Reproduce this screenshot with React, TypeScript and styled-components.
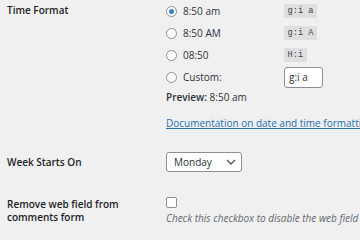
import React from 'react'
import styled, { createGlobalStyle } from 'styled-components'

const GlobalStyle = createGlobalStyle`
  html, body {
    margin: 0;
    background: #f0f0f1;
    overflow: hidden;
  }
  body {
    font-family: "Open Sans", "Noto Sans", sans-serif;
    font-size: 10px;
    line-height: 13px;
    color: #2c3338;
  }
`

const FormTable = styled.div`
  width: 360px;
  height: 240px;
  overflow: hidden;
`

const Row = styled.div<{ $top: number; $align?: string }>`
  display: grid;
  grid-template-columns: 159px 1fr;
  align-items: ${p => p.$align || 'start'};
  padding: ${p => p.$top}px 0 0 7px;
`

const Label = styled.div<{ $top?: number }>`
  font-weight: 600;
  color: #1d2327;
  padding: ${p => p.$top || 0}px 14px 0 0;
  line-height: 13px;
`

const Field = styled.div`
  min-width: 0;
  white-space: nowrap;
`

const Option = styled.label`
  display: flex;
  align-items: center;
  height: 22px;
`

const Radio = styled.span<{ $checked?: boolean }>`
  width: 11px;
  height: 11px;
  box-sizing: border-box;
  border: 1px solid #8c8f94;
  border-radius: 50%;
  background: #fff;
  margin-right: 6px;
  display: flex;
  align-items: center;
  justify-content: center;
  &::after {
    content: '';
    width: 5px;
    height: 5px;
    border-radius: 50%;
    background: ${p => (p.$checked ? '#3582c4' : 'transparent')};
  }
`

const OptionText = styled.span`
  width: 101px;
`

const Code = styled.code`
  font-family: "Liberation Mono", "DejaVu Sans Mono", monospace;
  font-size: 8.6px;
  line-height: 14px;
  padding: 0 3.6px;
  background: rgba(0, 0, 0, 0.07);
  color: #3c434a;
`

const TextInput = styled.div`
  box-sizing: border-box;
  width: 39px;
  height: 21px;
  border: 1px solid #8c8f94;
  border-radius: 3px;
  background: #fff;
  padding: 0 4px;
  line-height: 19px;
  color: #2c3338;
`

const Preview = styled.p`
  margin: 3px 0 0;
  strong {
    font-weight: 600;
  }
`

const DocLink = styled.a`
  display: block;
  margin-top: 13px;
  color: #2271b1;
  text-decoration: underline;
`

const Select = styled.div`
  box-sizing: border-box;
  width: 76px;
  height: 20px;
  border: 1px solid #8c8f94;
  border-radius: 3px;
  background: #fff;
  display: flex;
  align-items: center;
  justify-content: space-between;
  padding: 0 5px 0 7px;
  color: #2c3338;
`

const Checkbox = styled.span`
  display: block;
  width: 11px;
  height: 11px;
  box-sizing: border-box;
  border: 1px solid #8c8f94;
  border-radius: 2px;
  background: #fff;
`

const Description = styled.p`
  margin: 4px 0 0;
  font-style: italic;
  color: #646970;
`

const options = [
  { text: '8:50 am', code: 'g:i a', checked: true },
  { text: '8:50 AM', code: 'g:i A' },
  { text: '08:50', code: 'H:i' },
]

export default function App() {
  return (
    <FormTable>
      <GlobalStyle />
      <Row $top={0}>
        <Label $top={4}>Time Format</Label>
        <Field>
          {options.map(o => (
            <Option key={o.code}>
              <Radio $checked={o.checked} />
              <OptionText>{o.text}</OptionText>
              <Code>{o.code}</Code>
            </Option>
          ))}
          <Option>
            <Radio />
            <OptionText>Custom:</OptionText>
            <TextInput>g:i a</TextInput>
          </Option>
          <Preview>
            <strong>Preview:</strong> 8:50 am
          </Preview>
          <DocLink>Documentation on date and time formatting.</DocLink>
        </Field>
      </Row>
      <Row $top={22} $align="center">
        <Label>Week Starts On</Label>
        <Field>
          <Select>
            Monday
            <svg width="10" height="6" viewBox="0 0 10 6">
              <path d="M1 1l4 4 4-4" fill="none" stroke="#50575e" strokeWidth="1.4" />
            </svg>
          </Select>
        </Field>
      </Row>
      <Row $top={25}>
        <Label $top={1}>Remove web field from comments form</Label>
        <Field>
          <Checkbox />
          <Description>Check this checkbox to disable the web field on comment form.</Description>
        </Field>
      </Row>
    </FormTable>
  )
}
